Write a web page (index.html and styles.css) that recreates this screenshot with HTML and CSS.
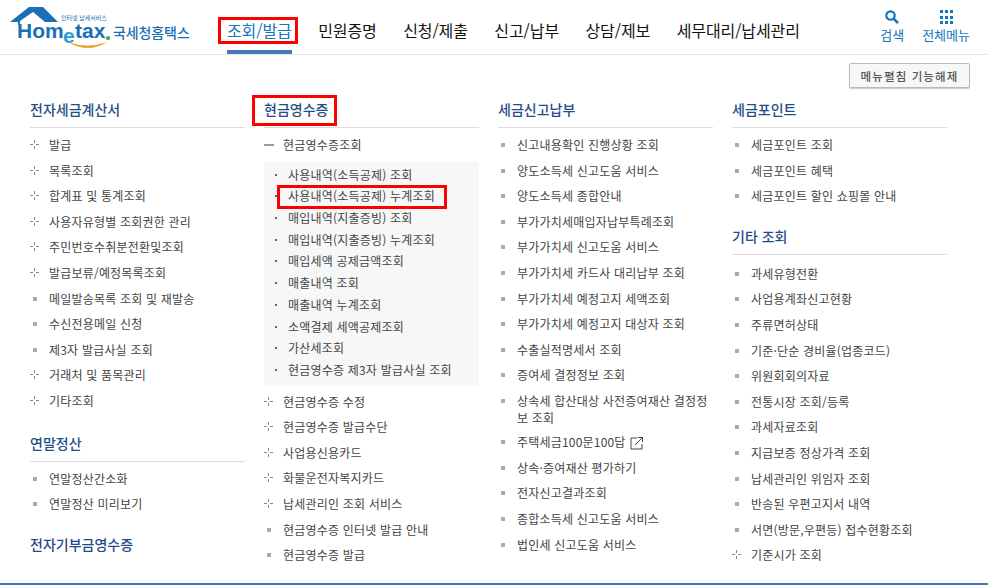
FILE: index.html
```html
<!DOCTYPE html>
<html lang="ko">
<head>
    <meta charset="UTF-8">
    <title>국세청 홈택스</title>
    <link rel="stylesheet" href="styles.css">
</head>
<body>
    <!-- 상단 메뉴 -->
    <header class="top-bar">
        <a class="logo">
            <svg class="logo-mark" width="112" height="54" viewBox="0 0 112 54">
                <path d="M10 22 L29 7 H43 L58 22 H45 L33 12 L20 21 V25 H18 V22 Z" fill="#1a6fb5"/>
                <text x="61" y="20" class="logo-small">인터넷 납세서비스</text>
                <text x="17" y="38" class="logo-word">Hom</text>
                <text x="63" y="43" class="logo-e">e</text>
                <text x="75" y="38" class="logo-word">tax</text>
                <circle cx="108" cy="38" r="2" fill="#3aa655"/>
                <path d="M68 42 Q88 54 107 42 Q88 49 68 42 Z" fill="#f0a030"/>
            </svg>
            <span class="logo-name">국세청홈택스</span>
        </a>
        <nav class="main-nav">
            <a class="nav-item active">조회/발급</a>
            <a class="nav-item">민원증명</a>
            <a class="nav-item">신청/제출</a>
            <a class="nav-item">신고/납부</a>
            <a class="nav-item">상담/제보</a>
            <a class="nav-item">세무대리/납세관리</a>
        </nav>
        <div class="top-tools">
            <a class="tool">
                <svg width="16" height="16" viewBox="0 0 16 16"><circle cx="6.5" cy="6.5" r="4.2" fill="none" stroke="#0f76c0" stroke-width="2.2"/><path d="M9.8 9.8 L14 14" stroke="#0f76c0" stroke-width="2.6"/></svg>
                <span>검색</span>
            </a>
            <a class="tool">
                <span class="grid-icon"><i></i><i></i><i></i><i></i><i></i><i></i><i></i><i></i><i></i></span>
                <span>전체메뉴</span>
            </a>
        </div>
    </header>

    <div class="toolbar">
        <button class="fold-btn">메뉴펼침 기능해제</button>
    </div>

    <!-- 메뉴 목록 -->
    <main class="menu-grid">
        <section class="menu-col">
            <h3 class="col-title">전자세금계산서</h3>
            <ul class="menu-list">
                <li class="plus">발급</li>
                <li class="plus">목록조회</li>
                <li class="plus">합계표 및 통계조회</li>
                <li class="plus">사용자유형별 조회권한 관리</li>
                <li class="plus">주민번호수취분전환및조회</li>
                <li class="plus">발급보류/예정목록조회</li>
                <li class="dot">메일발송목록 조회 및 재발송</li>
                <li class="dot">수신전용메일 신청</li>
                <li class="dot">제3자 발급사실 조회</li>
                <li class="plus">거래처 및 품목관리</li>
                <li class="plus">기타조회</li>
            </ul>
            <h3 class="col-title plain">연말정산</h3>
            <ul class="menu-list">
                <li class="dot">연말정산간소화</li>
                <li class="dot">연말정산 미리보기</li>
            </ul>
            <h3 class="col-title last">전자기부금영수증</h3>
        </section>

        <section class="menu-col">
            <h3 class="col-title"><span class="marked-title">현금영수증</span></h3>
            <ul class="menu-list">
                <li class="minus">현금영수증조회</li>
            </ul>
            <ul class="sub-list">
                <li>사용내역(소득공제) 조회</li>
                <li class="marked-row">사용내역(소득공제) 누계조회</li>
                <li>매입내역(지출증빙) 조회</li>
                <li>매입내역(지출증빙) 누계조회</li>
                <li>매입세액 공제금액조회</li>
                <li>매출내역 조회</li>
                <li>매출내역 누계조회</li>
                <li>소액결제 세액공제조회</li>
                <li>가산세조회</li>
                <li>현금영수증 제3자 발급사실 조회</li>
            </ul>
            <ul class="menu-list">
                <li class="plus">현금영수증 수정</li>
                <li class="plus">현금영수증 발급수단</li>
                <li class="plus">사업용신용카드</li>
                <li class="plus">화물운전자복지카드</li>
                <li class="plus">납세관리인 조회 서비스</li>
                <li class="dot">현금영수증 인터넷 발급 안내</li>
                <li class="dot">현금영수증 발급</li>
            </ul>
        </section>

        <section class="menu-col">
            <h3 class="col-title">세금신고납부</h3>
            <ul class="menu-list">
                <li class="dot">신고내용확인 진행상황 조회</li>
                <li class="dot">양도소득세 신고도움 서비스</li>
                <li class="dot">양도소득세 종합안내</li>
                <li class="dot">부가가치세매입자납부특례조회</li>
                <li class="dot">부가가치세 신고도움 서비스</li>
                <li class="dot">부가가치세 카드사 대리납부 조회</li>
                <li class="dot">부가가치세 예정고지 세액조회</li>
                <li class="dot">부가가치세 예정고지 대상자 조회</li>
                <li class="dot">수출실적명세서 조회</li>
                <li class="dot">증여세 결정정보 조회</li>
                <li class="dot wrap">상속세 합산대상 사전증여재산 결정정보 조회</li>
                <li class="dot">주택세금100문100답<svg class="ext-icon" width="14" height="14" viewBox="0 0 14 14"><path d="M7 2 H1 V13 H12 V8" fill="none" stroke="#444"/><path d="M5 9 L12 2 M8 1.5 H12.5 V6" fill="none" stroke="#444"/></svg></li>
                <li class="dot">상속·증여재산 평가하기</li>
                <li class="dot">전자신고결과조회</li>
                <li class="dot">종합소득세 신고도움 서비스</li>
                <li class="dot">법인세 신고도움 서비스</li>
            </ul>
        </section>

        <section class="menu-col">
            <h3 class="col-title">세금포인트</h3>
            <ul class="menu-list">
                <li class="dot">세금포인트 조회</li>
                <li class="dot">세금포인트 혜택</li>
                <li class="dot">세금포인트 할인 쇼핑몰 안내</li>
            </ul>
            <h3 class="col-title second">기타 조회</h3>
            <ul class="menu-list">
                <li class="dot">과세유형전환</li>
                <li class="dot">사업용계좌신고현황</li>
                <li class="dot">주류면허상태</li>
                <li class="dot">기준·단순 경비율(업종코드)</li>
                <li class="dot">위원회회의자료</li>
                <li class="dot">전통시장 조회/등록</li>
                <li class="dot">과세자료조회</li>
                <li class="dot">지급보증 정상가격 조회</li>
                <li class="dot">납세관리인 위임자 조회</li>
                <li class="dot">반송된 우편고지서 내역</li>
                <li class="dot">서면(방문,우편등) 접수현황조회</li>
                <li class="plus">기준시가 조회</li>
            </ul>
        </section>
    </main>
    <div class="bottom-line"></div>
</body>
</html>
```

FILE: styles.css
```css
*, *::before, *::after {
    margin: 0;
    padding: 0;
    box-sizing: border-box;
}

html, body {
    height: 586px;
    overflow: hidden;
}

body {
    position: relative;
    font-family: "Noto Sans CJK KR", "Liberation Sans", sans-serif;
    background: #fff;
    color: #444;
    font-size: 12px;
}

ul {
    list-style: none;
}

/* 상단 메뉴 */
.top-bar {
    display: flex;
    height: 55px;
    border-bottom: 1px solid #e1e1e1;
}

.logo {
    display: flex;
    align-items: flex-start;
    width: 218px;
}

.logo-mark {
    flex: none;
}

.logo-small {
    font-size: 6px;
    fill: #1a6fb5;
}

.logo-word {
    font-family: "Liberation Sans", sans-serif;
    font-size: 21px;
    font-weight: 700;
    fill: #1a6fb5;
}

.logo-e {
    font-family: "Liberation Sans", sans-serif;
    font-size: 21px;
    font-weight: 700;
    fill: #2f9bd6;
}

.logo-name {
    margin: 22px 0 0 1px;
    font-size: 14px;
    line-height: 20px;
    font-weight: 500;
    color: #1a6fb5;
    letter-spacing: -0.1px;
    white-space: nowrap;
}

.main-nav {
    display: flex;
    flex: 1;
}

.nav-item {
    position: relative;
    margin: 0 9px;
    padding-top: 18px;
    height: 54px;
    font-size: 16px;
    line-height: 24px;
    letter-spacing: -0.1px;
    color: #111;
    white-space: nowrap;
}

.nav-item + .nav-item {
    margin-left: 17.5px;
}

.nav-item.active {
    color: #0f76c0;
    border-bottom: 4px solid #4a7ab5;
}

/* 빨간 표시 */
.nav-item.active::after {
    content: "";
    position: absolute;
    left: -9px;
    right: -6px;
    top: 17px;
    height: 27px;
    border: 3px solid #f00;
}

.top-tools {
    display: flex;
    gap: 18px;
    padding: 9px 18px 0 0;
}

.tool {
    display: flex;
    flex-direction: column;
    align-items: center;
    gap: 1px;
    font-size: 13px;
    line-height: 18px;
    color: #0f76c0;
}

.grid-icon {
    display: grid;
    grid-template-columns: repeat(3, 3px);
    gap: 2px;
    margin-top: 1px;
    height: 15px;
}

.grid-icon i {
    width: 3px;
    height: 3px;
    background: #0f76c0;
}

.toolbar {
    display: flex;
    justify-content: flex-end;
    padding: 8px 18px 0 0;
}

.fold-btn {
    height: 25px;
    width: 121px;
    background: #f7f7f7;
    border: 1px solid #bbb;
    border-radius: 2px;
    box-shadow: 0 1px 1px #ccc;
    font: 500 11.5px "Noto Sans CJK KR", sans-serif;
    letter-spacing: 1.1px;
    color: #555;
}

/* 메뉴 목록 */
.menu-grid {
    display: grid;
    grid-template-columns: repeat(4, 215px);
    column-gap: 19px;
    padding: 6px 0 0 30px;
}

.col-title {
    height: 34px;
    border-bottom: 1px solid #ddd;
    font-size: 14px;
    font-weight: 500;
    line-height: 22px;
    color: #1f4e86;
    padding-top: 4px;
    margin-bottom: 4px;
}

.col-title.plain {
    margin-top: 14px;
}

.col-title.last {
    margin-top: 12px;
    border-bottom: 0;
}

.col-title.second {
    margin-top: 12px;
    margin-bottom: 6px;
}

.marked-title {
    position: relative;
    display: inline-block;
}

.marked-title::after {
    content: "";
    position: absolute;
    left: -12px;
    right: -9px;
    top: -3px;
    height: 31px;
    border: 3px solid #f00;
}

.menu-list li {
    position: relative;
    min-height: 25.6px;
    padding-left: 19px;
    line-height: 25.6px;
    letter-spacing: 0.2px;
    color: #444;
}

.menu-list li::before {
    content: "";
    position: absolute;
}

.menu-list li.dot::before {
    left: 3px;
    top: 11px;
    width: 4px;
    height: 4px;
    background: #aaa;
}

.menu-list li.plus::before {
    left: 0;
    top: 8px;
    width: 9px;
    height: 9px;
    background:
        linear-gradient(#888, #888) 0 4px / 3px 1px no-repeat,
        linear-gradient(#888, #888) 6px 4px / 3px 1px no-repeat,
        linear-gradient(#888, #888) 4px 0 / 1px 3px no-repeat,
        linear-gradient(#888, #888) 4px 6px / 1px 3px no-repeat;
}

.menu-list li.minus::before {
    left: 0;
    top: 12px;
    width: 10px;
    height: 2px;
    background: #999;
}

.menu-list li.wrap {
    line-height: 17px;
    padding: 3.6px 0 3.6px 19px;
}

.ext-icon {
    margin-left: 4px;
    vertical-align: -3px;
}

.sub-list {
    background: #f7f7f7;
    margin: 4px 0 3px;
    padding: 2px 0 5px 24px;
}

.sub-list li {
    position: relative;
    line-height: 21.7px;
    letter-spacing: 0.2px;
    color: #444;
}

.sub-list li::before {
    content: "";
    position: absolute;
    left: -13px;
    top: 10px;
    width: 2px;
    height: 2px;
    background: #666;
}

.marked-row::after {
    content: "";
    position: absolute;
    left: -11px;
    top: 0;
    width: 170px;
    height: 24px;
    border: 3px solid #f00;
}

.bottom-line {
    position: absolute;
    left: 0;
    right: 0;
    top: 583px;
    height: 2px;
    background: #3f76b5;
}
```
